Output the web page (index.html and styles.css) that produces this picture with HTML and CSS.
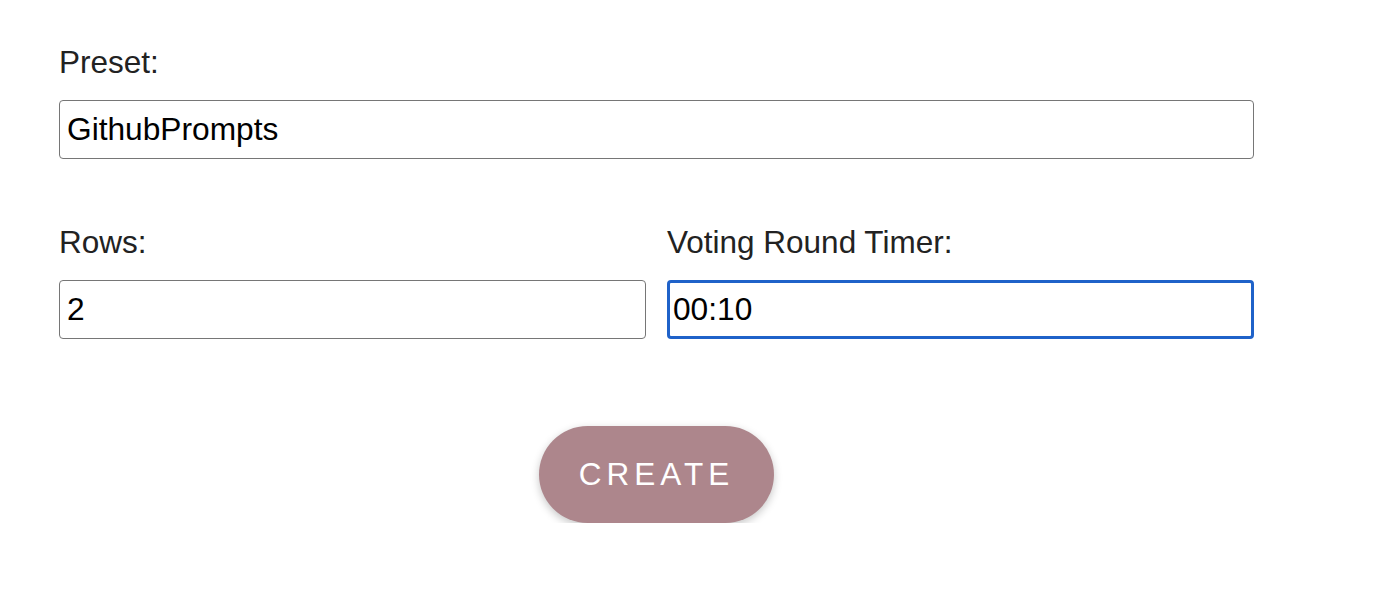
FILE: index.html
```html
<!DOCTYPE html>
<html>
<head>
<meta charset="utf-8">
<link rel="stylesheet" href="styles.css">
</head>
<body>
<form class="form">
  <div class="field">
    <label class="label">Preset:</label>
    <input class="input" type="text" value="GithubPrompts">
  </div>
  <div class="row">
    <div class="field">
      <label class="label">Rows:</label>
      <input class="input" type="text" value="2">
    </div>
    <div class="field">
      <label class="label">Voting Round Timer:</label>
      <input class="input input-focused" type="text" value="00:10">
    </div>
  </div>
  <div class="actions">
    <button class="create" type="button">CREATE</button>
  </div>
</form>
</body>
</html>
```
FILE: styles.css
```css
html, body {
  margin: 0;
  padding: 0;
  background: #ffffff;
}
.form {
  width: 1195px;
  padding: 44px 0 0 59px;
  font-family: "Liberation Sans", Arial, sans-serif;
}
.field {
  display: flex;
  flex-direction: column;
}
.label {
  font-size: 31.5px;
  line-height: 36px;
  color: #222222;
  margin-bottom: 20px;
}
.input {
  box-sizing: border-box;
  height: 59px;
  width: 100%;
  margin: 0;
  padding: 0 0 0 7px;
  border: 1px solid #767676;
  border-radius: 4px;
  font-family: "Liberation Sans", Arial, sans-serif;
  font-size: 31.7px;
  color: #000000;
  background: #ffffff;
  outline: none;
}
.input-focused {
  border: 3px solid #1f62c9;
  padding-left: 3px;
}
.row {
  margin-top: 65px;
  display: grid;
  grid-template-columns: 1fr 1fr;
  column-gap: 21px;
}
.actions {
  margin-top: 87px;
  display: flex;
  justify-content: center;
}
.create {
  width: 235px;
  height: 97px;
  border: none;
  border-radius: 49px;
  background: #ad868c;
  color: #ffffff;
  font-family: "Liberation Sans", Arial, sans-serif;
  font-size: 31.5px;
  letter-spacing: 5px;
  padding: 0;
  box-shadow: 0 3px 8px rgba(0, 0, 0, 0.22);
  cursor: pointer;
}
```
